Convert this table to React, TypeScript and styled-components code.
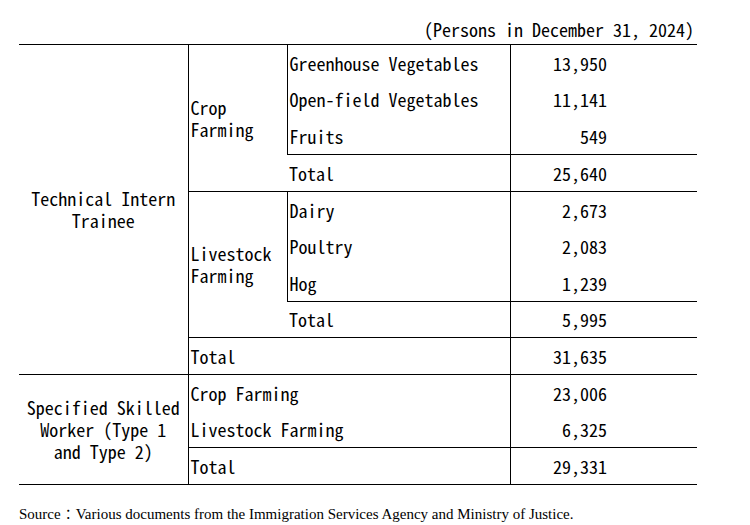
import styled, { createGlobalStyle } from "styled-components";

const Global = createGlobalStyle`
  html, body {
    margin: 0;
    padding: 0;
    background: #ffffff;
  }
`;

const MONO = `"Noto Sans Mono CJK JP", "DejaVu Sans Mono", monospace`;

const Page = styled.div`
  width: 750px;
  height: 525px;
  padding-left: 19px;
  box-sizing: border-box;
  color: #000;
  font-family: ${MONO};
  font-size: 18px;
`;

const Unit = styled.div`
  width: 678px;
  height: 44px;
  box-sizing: border-box;
  display: flex;
  align-items: flex-end;
  justify-content: flex-end;
  padding: 0 3px 4px 0;
  line-height: 22px;
  white-space: pre;
`;

const Table = styled.table`
  width: 678px;
  table-layout: fixed;
  border-collapse: collapse;
  border-top: 1px solid #000;
`;

const Row = styled.tr`
  height: 36.67px;
`;

type CellProps = {
  $left?: boolean;
  $bottom?: boolean;
  $align?: "left" | "center" | "right";
};

const Cell = styled.td<CellProps>`
  padding: 0 2px;
  vertical-align: middle;
  line-height: 22px;
  white-space: nowrap;
  text-align: ${(p) => p.$align ?? "left"};
  border-left: ${(p) => (p.$left ? "1px solid #000" : "none")};
  border-bottom: ${(p) => (p.$bottom ? "1px solid #000" : "none")};
`;

const Num = styled(Cell)`
  text-align: right;
  padding-right: 90px;
  border-left: 1px solid #000;
`;

const Source = styled.p`
  margin: 20px 0 0;
  font-family: "Liberation Serif", "Noto Serif CJK JP", "Noto Sans CJK JP", serif;
  font-size: 15px;
  line-height: 18px;
`;

type Item = [string, string];

const crop: Item[] = [
  ["Greenhouse Vegetables", "13,950"],
  ["Open-field Vegetables", "11,141"],
  ["Fruits", "549"],
];

const livestock: Item[] = [
  ["Dairy", "2,673"],
  ["Poultry", "2,083"],
  ["Hog", "1,239"],
];

function Group({ title, items, total }: { title: string[]; items: Item[]; total: string }) {
  return (
    <>
      {items.map(([label, value], i) => (
        <Row key={label}>
          {i === 0 && (
            <Cell rowSpan={items.length + 1} $left $bottom>
              {title[0]}
              <br />
              {title[1]}
            </Cell>
          )}
          <Cell $left $bottom={i === items.length - 1}>
            {label}
          </Cell>
          <Num $bottom={i === items.length - 1}>{value}</Num>
        </Row>
      ))}
      <Row>
        <Cell $bottom>Total</Cell>
        <Num $bottom>{total}</Num>
      </Row>
    </>
  );
}

export default function App() {
  return (
    <Page>
      <Global />
      <Unit>(Persons in December 31, 2024)</Unit>
      <Table>
        <colgroup>
          <col style={{ width: 169 }} />
          <col style={{ width: 99 }} />
          <col style={{ width: 223 }} />
          <col style={{ width: 187 }} />
        </colgroup>
        <tbody>
          <Row>
            <Cell rowSpan={9} $align="center" $bottom>
              Technical Intern
              <br />
              Trainee
            </Cell>
            <Cell rowSpan={4} $left $bottom>
              Crop
              <br />
              Farming
            </Cell>
            <Cell $left>{crop[0][0]}</Cell>
            <Num>{crop[0][1]}</Num>
          </Row>
          {crop.slice(1).map(([label, value], i) => (
            <Row key={label}>
              <Cell $left $bottom={i === 1}>
                {label}
              </Cell>
              <Num $bottom={i === 1}>{value}</Num>
            </Row>
          ))}
          <Row>
            <Cell $bottom>Total</Cell>
            <Num $bottom>25,640</Num>
          </Row>
          <Group title={["Livestock", "Farming"]} items={livestock} total="5,995" />
          <Row>
            <Cell colSpan={2} $left $bottom>
              Total
            </Cell>
            <Num $bottom>31,635</Num>
          </Row>
          <Row>
            <Cell rowSpan={3} $align="center" $bottom>
              Specified Skilled
              <br />
              Worker (Type 1
              <br />
              and Type 2)
            </Cell>
            <Cell colSpan={2} $left>
              Crop Farming
            </Cell>
            <Num>23,006</Num>
          </Row>
          <Row>
            <Cell colSpan={2} $left $bottom>
              Livestock Farming
            </Cell>
            <Num $bottom>6,325</Num>
          </Row>
          <Row>
            <Cell colSpan={2} $left $bottom>
              Total
            </Cell>
            <Num $bottom>29,331</Num>
          </Row>
        </tbody>
      </Table>
      <Source>Source：Various documents from the Immigration Services Agency and Ministry of Justice.</Source>
    </Page>
  );
}
